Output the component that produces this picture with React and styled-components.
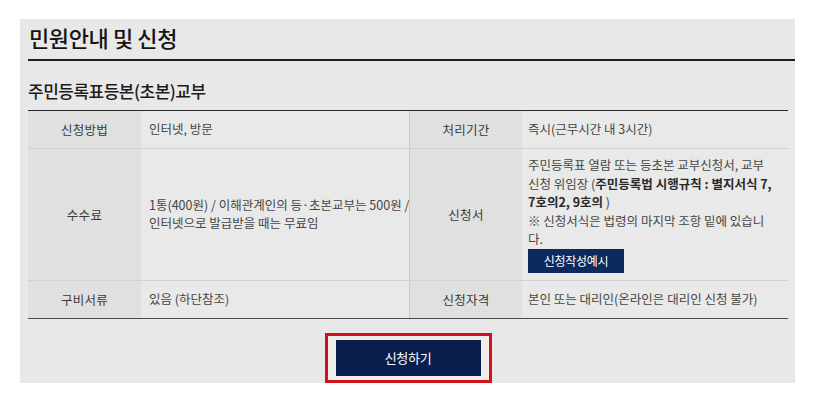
import styled, { createGlobalStyle } from "styled-components";

const GlobalStyle = createGlobalStyle`
  body {
    margin: 0;
    background: #fff;
    font-family: "Noto Sans CJK KR", "Noto Sans", sans-serif;
  }
`;

/* ===== STYLES ===== */
const Panel = styled.section`
  box-sizing: border-box;
  width: 775px;
  height: 364px;
  margin: 19px 0 0 20px;
  padding-left: 8px;
  background: #e8e8e8;
  display: flex;
  flex-direction: column;
`;

const PageTitle = styled.h2`
  margin: 0;
  padding: 2px 0 6px 1px;
  line-height: 32px;
  font-size: 22px;
  font-weight: 500;
  letter-spacing: -0.4px;
  color: #151515;
  border-bottom: 2px solid #1e1e1e;
`;

const SubTitle = styled.h3`
  margin: 0;
  padding: 18px 0 7px;
  line-height: 24px;
  font-size: 17px;
  font-weight: 500;
  letter-spacing: -0.5px;
  color: #1c1c1c;
`;

const InfoTable = styled.div`
  width: 760px;
  display: grid;
  grid-template-columns: 113px 268px 113px 266px;
  border-top: 1px solid #2a2a2a;
  border-bottom: 1px solid #4a4a4a;
`;

const Th = styled.div`
  box-sizing: border-box;
  min-height: ${({ first }) => (first ? "37px" : "38px")};
  display: flex;
  align-items: center;
  justify-content: center;
  background: #e0e0e0;
  font-size: 12.5px;
  letter-spacing: 0.3px;
  color: #3a3a3a;
  border-top: ${({ first }) => (first ? "none" : "1px solid #d2d2d2")};
  border-left: ${({ divided }) => (divided ? "1px solid #cdcdcd" : "none")};
`;

const Td = styled.div`
  box-sizing: border-box;
  display: flex;
  flex-direction: column;
  justify-content: center;
  padding: 7px 7px 7px ${({ inset }) => inset || "8px"};
  background: #e9e9e9;
  font-size: 12.5px;
  line-height: 18.5px;
  letter-spacing: 0;
  color: #464646;
  white-space: nowrap;
  border-top: ${({ first }) => (first ? "none" : "1px solid #d2d2d2")};
`;

const Strong = styled.b`
  font-weight: 700;
  color: #2a2a2a;
`;

const SmallButton = styled.button`
  align-self: flex-start;
  width: 96px;
  height: 24px;
  margin: 0;
  padding: 0;
  border: none;
  background: #0d2a5e;
  color: #fff;
  font-family: inherit;
  font-size: 12px;
  letter-spacing: -0.3px;
  cursor: pointer;
`;

const Footer = styled.div`
  width: 760px;
  display: flex;
  justify-content: center;
  padding-top: 14px;
`;

const Highlight = styled.div`
  padding: 4px 8px;
  border: 3px solid #d3111b;
  background: #f1ecec;
`;

const ApplyButton = styled.button`
  display: block;
  width: 145px;
  height: 36px;
  border: none;
  background: #0b1f4f;
  color: #fff;
  font-family: inherit;
  font-size: 13px;
  letter-spacing: -0.3px;
  cursor: pointer;
`;

/* ===== COMPONENT ===== */
export default function App() {
  return (
    <>
      <GlobalStyle />
      <Panel>
        <PageTitle>민원안내 및 신청</PageTitle>
        <SubTitle>주민등록표등본(초본)교부</SubTitle>

        <InfoTable>
          <Th first>신청방법</Th>
          <Td first>인터넷, 방문</Td>
          <Th first divided>처리기간</Th>
          <Td first inset="6px">즉시(근무시간 내 3시간)</Td>

          <Th>수수료</Th>
          <Td>
            <span>
              1통(400원) / 이해관계인의 등·초본교부는 500원 /
              <br />
              인터넷으로 발급받을 때는 무료임
            </span>
          </Td>
          <Th divided>신청서</Th>
          <Td inset="6px">
            <span>
              주민등록표 열람 또는 등초본 교부신청서, 교부
              <br />
              신청 위임장 (<Strong>주민등록법 시행규칙 : 별지서식 7,</Strong>
              <br />
              <Strong>7호의2, 9호의</Strong> )
              <br />※ 신청서식은 법령의 마지막 조항 밑에 있습니
              <br />다.
            </span>
            <SmallButton>신청작성예시</SmallButton>
          </Td>

          <Th>구비서류</Th>
          <Td>있음 (하단참조)</Td>
          <Th divided>신청자격</Th>
          <Td inset="6px">본인 또는 대리인(온라인은 대리인 신청 불가)</Td>
        </InfoTable>

        <Footer>
          <Highlight>
            <ApplyButton>신청하기</ApplyButton>
          </Highlight>
        </Footer>
      </Panel>
    </>
  );
}
